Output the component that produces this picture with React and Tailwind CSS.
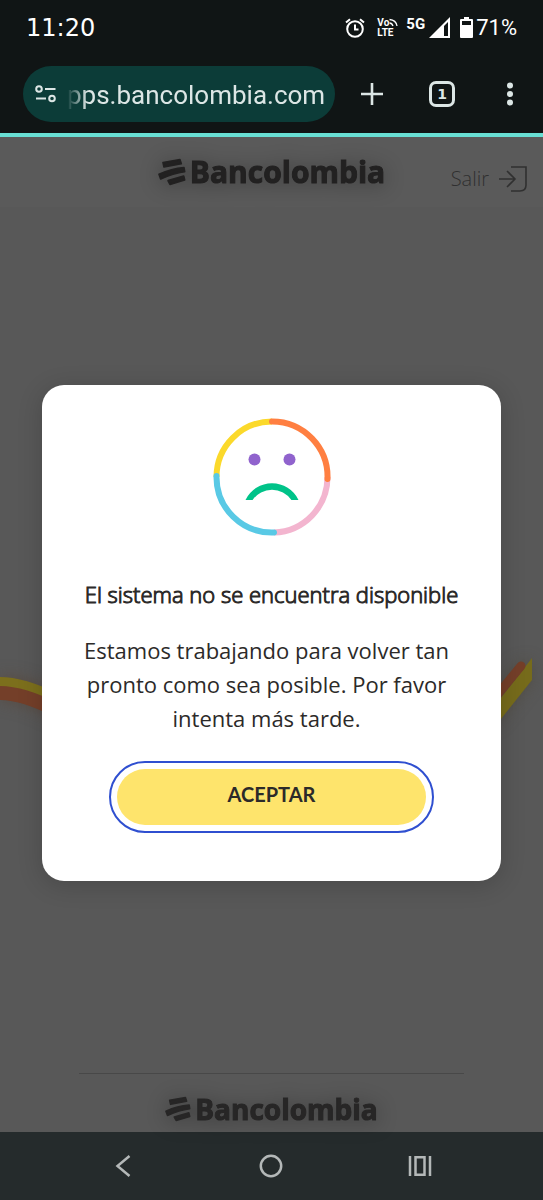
import React, { useState } from 'react';

const BankLogo = ({ small }) => (
  <div className={`flex items-center gap-1 ${small ? 'text-[#272626]' : 'text-[#222121]'} drop-shadow-[0_2px_10px_rgba(0,0,0,0.35)]`}>
    <svg viewBox="58 58 84 82" className={small ? 'h-[26px] w-[26px]' : 'h-7 w-7'} fill="currentColor" stroke="currentColor" strokeWidth="5" strokeLinejoin="round" aria-hidden="true">
      <path d="M73 71L124 62L128 74L76 84Z" />
      <path d="M61 106Q98 89 136 86L138 98Q104 102 66 120Z" />
      <path d="M88 125L135 111L138 123L94 136Z" />
    </svg>
    <span className={`font-['Open_Sans','Noto_Sans',sans-serif] leading-9 font-bold [-webkit-text-stroke:1px_currentColor] ${small ? 'text-[28px]' : 'text-[30px]'}`}>
      Bancolombia
    </span>
  </div>
);

const StatusBar = () => (
  <div className="flex h-[54px] items-center justify-between pt-px pr-[26px] pl-[26px] text-white">
    <time className="font-['DejaVu_Sans',sans-serif] text-[24px]">11:20</time>
    <div className="flex items-center">
      <svg viewBox="0 0 20 20" className="h-5 w-5" fill="none" stroke="currentColor" strokeWidth="2" aria-label="Alarma">
        <circle cx="10" cy="11" r="7.8" />
        <path d="M10 6.5V11.5H13.5M1 4.5L5 1.2M19 4.5L15 1.2" />
      </svg>
      <div className="ml-3 font-['Roboto',sans-serif] text-[10px] leading-[10px] font-bold">
        <div className="flex">
          Vo
          <svg viewBox="0 0 9 9" className="h-[9px] w-[9px]" fill="none" stroke="currentColor" strokeWidth="1.3" aria-hidden="true">
            <path d="M0.5 5Q3 5 4 8M0.5 1.5Q7 2 8 8" />
          </svg>
        </div>
        <div>LTE</div>
      </div>
      <span className="ml-2 self-start font-['Roboto',sans-serif] text-[15px] leading-4 font-bold">5G</span>
      <svg viewBox="0 0 21 21" className="ml-1 h-[21px] w-[21px]" fill="currentColor" aria-label="Señal">
        <path fillRule="evenodd" d="M21 0V21H0ZM19 5L15 9V19H19Z" />
      </svg>
      <svg viewBox="0 0 13 21" className="ml-[10px] h-[21px] w-[13px]" fill="currentColor" aria-label="Batería">
        <path fillRule="evenodd" d="M4 0H9V2H12Q13 2 13 3V20Q13 21 12 21H1Q0 21 0 20V3Q0 2 1 2H4ZM2 4V8H11V4Z" />
      </svg>
      <span className="ml-[3px] font-['Roboto',sans-serif] text-[22px] leading-6">71%</span>
    </div>
  </div>
);

const Toolbar = () => (
  <div className="flex items-center pt-3 pr-[29px] pb-[11px] pl-[23px] text-[#dce6e5]">
    <label className="flex h-14 min-w-0 flex-1 items-center rounded-full bg-[#0c3c38] pr-2 pl-3">
      <svg viewBox="0 0 22 18" className="h-[18px] w-[22px] shrink-0" fill="none" stroke="currentColor" strokeWidth="2" aria-hidden="true">
        <circle cx="4" cy="4" r="2.8" />
        <circle cx="17" cy="13.5" r="2.8" />
        <path d="M10 4H20.5M1 13.5H11" />
      </svg>
      <input
        type="text"
        aria-label="Dirección"
        readOnly
        value="pps.bancolombia.com"
        className="ml-[10px] h-10 w-full min-w-0 bg-transparent pt-0.5 font-['Roboto',sans-serif] text-[26px] outline-none [mask-image:linear-gradient(to_right,transparent,black_20px)]"
      />
    </label>
    <button type="button" aria-label="Nueva pestaña" className="ml-[25px]">
      <svg viewBox="0 0 24 24" className="h-6 w-6" stroke="currentColor" strokeWidth="2.6">
        <path d="M12 1V23M1 12H23" />
      </svg>
    </button>
    <button type="button" aria-label="Pestañas abiertas" className="ml-[45px] flex h-[26px] w-[26px] items-center justify-center rounded-[7px] border-[3px] border-current font-['DejaVu_Sans',sans-serif] text-[14px] leading-4 font-bold">
      1
    </button>
    <button type="button" aria-label="Menú" className="ml-[51px]">
      <svg viewBox="0 0 8 24" className="h-6 w-2" fill="currentColor">
        <circle cx="4" cy="3.5" r="3" />
        <circle cx="4" cy="12" r="3" />
        <circle cx="4" cy="20.5" r="3" />
      </svg>
    </button>
  </div>
);

const SadFace = () => (
  <svg viewBox="0 0 118 118" className="h-[118px] w-[118px]" fill="none" strokeWidth="6" aria-hidden="true">
    <path d="M3.5 59A55.5 55.5 0 0 1 59 3.5" stroke="#fbd92b" />
    <path d="M114.5 59A55.5 55.5 0 0 1 61 114.5" stroke="#f3b5cf" />
    <path d="M3.5 58A55.5 55.5 0 0 0 61 114.5" stroke="#59c9e5" strokeLinecap="round" />
    <path d="M59 3.5A55.5 55.5 0 0 1 114.5 61" stroke="#ff7f41" strokeLinecap="round" />
    <circle cx="41.5" cy="41.5" r="6" fill="#9063cd" />
    <circle cx="76.5" cy="41.5" r="6" fill="#9063cd" />
    <path d="M32.5 82A29.4 29.4 0 0 1 85.5 82H78.4A23.5 23.5 0 0 0 39.6 82Z" fill="#00c389" />
  </svg>
);

const ErrorDialog = ({ onAccept }) => (
  <div className="absolute inset-0 flex items-center px-[42px] pb-[3px]">
    <div role="alertdialog" aria-labelledby="dialog-title" aria-describedby="dialog-text" className="flex w-full flex-col items-center rounded-[22px] bg-white px-8 pt-[33px] pb-14 text-[#2c2a29] shadow-[0_4px_24px_rgba(0,0,0,0.18)]">
      <SadFace />
      <h1 id="dialog-title" className="mt-[41px] text-center text-[22px] leading-[34px] font-light [-webkit-text-stroke:1px_currentColor]">
        El sistema no se encuentra disponible
      </h1>
      <p id="dialog-text" className="mt-[22px] pr-[10px] text-center text-[22px] leading-[34px]">
        Estamos trabajando para volver tan pronto como sea posible. Por favor intenta más tarde.
      </p>
      <div className="mt-[34px] w-full px-[43px]">
        <button type="button" onClick={onAccept} className="h-14 w-full rounded-full bg-[#fee46c] pb-1.5 font-['Lato',sans-serif] text-[20px] font-bold outline-2 outline-offset-[6px] outline-[#2f4fd0]">
          ACEPTAR
        </button>
      </div>
    </div>
  </div>
);

export default function App() {
  const [open, setOpen] = useState(true);

  return (
    <div className="flex min-h-screen flex-col bg-[#585858] font-['Open_Sans','Noto_Sans',sans-serif]">
      <div className="border-b-4 border-[#68dfd4] bg-[#101515]">
        <StatusBar />
        <Toolbar />
      </div>

      <main className="relative flex flex-1 flex-col">
        <header className="grid h-[70px] grid-cols-[1fr_auto_1fr] items-center bg-[#5a5a5a] px-4">
          <span />
          <BankLogo />
          <a href="#salir" className="flex items-center gap-[10px] justify-self-end pt-[14px] text-[20px] font-light text-[#303030]">
            Salir
            <svg viewBox="0 0 28 26" className="h-[26px] w-7" fill="none" stroke="currentColor" strokeWidth="1.6" aria-hidden="true">
              <path d="M0 13H16M8 5L16 13L8 21M12 1H27V19Q27 25 21 25H12" />
            </svg>
          </a>
        </header>

        {/* brand strokes on both sides of the dialog */}
        <div className="flex flex-1 items-center justify-between pt-[100px]" aria-hidden="true">
          <svg viewBox="0 0 60 80" className="h-20 w-[60px] drop-shadow-[0_0_8px_rgba(90,60,40,0.5)]" fill="none">
            <path d="M0 32Q24 32 60 50" stroke="#7c6f1c" strokeWidth="10" />
            <path d="M0 43Q24 43 60 62" stroke="#743f29" strokeWidth="14" />
          </svg>
          <svg viewBox="0 0 60 80" className="h-20 w-[60px] drop-shadow-[0_0_8px_rgba(70,60,40,0.4)]" fill="none">
            <path d="M10 58L49 8V30L10 79Z" fill="#766b1b" />
            <path d="M10 50L38 16" stroke="#743f29" strokeWidth="9" strokeLinecap="round" />
          </svg>
        </div>

        <footer className="flex flex-col items-center px-[79px] pb-[5px]">
          <hr className="mb-[17px] w-full border-[#484848]" />
          <BankLogo small />
        </footer>

        {open && <ErrorDialog onAccept={() => setOpen(false)} />}
      </main>

      <nav className="grid h-[68px] grid-cols-3 items-center justify-items-center bg-[#252b2c] px-[49px] text-[#b4b8b8]">
        <button type="button" aria-label="Atrás">
          <svg viewBox="0 0 24 24" className="h-6 w-6" fill="none" stroke="currentColor" strokeWidth="2.5">
            <path d="M18.5 2L6.5 12L18.5 22" />
          </svg>
        </button>
        <button type="button" aria-label="Inicio">
          <svg viewBox="0 0 24 24" className="h-6 w-6" fill="none" stroke="currentColor" strokeWidth="2.5">
            <circle cx="12" cy="12" r="10.2" />
          </svg>
        </button>
        <button type="button" aria-label="Recientes">
          <svg viewBox="0 0 24 24" className="h-6 w-6" fill="none" stroke="currentColor" strokeWidth="2.5">
            <path d="M2 2V22M22 2V22M7.5 3.3H16.5V20.7H7.5Z" />
          </svg>
        </button>
      </nav>
    </div>
  );
}
